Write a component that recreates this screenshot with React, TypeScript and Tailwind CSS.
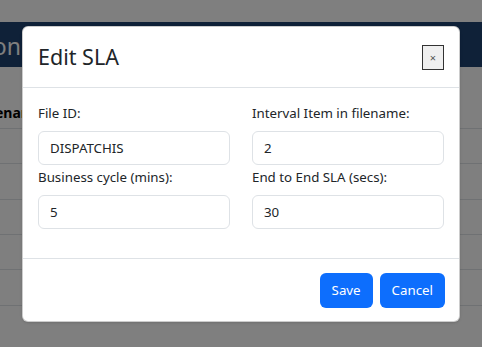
const font = { fontFamily: '"Noto Sans", "Open Sans", sans-serif' };

const rowHeights = [35, 36, 35, 35, 36];

const Field = ({ label, value }: { label: string; value: string }) => (
  <div>
    <label className="block text-[13.3px] leading-[21px] text-[#212529] mb-[7px]">{label}</label>
    <input
      readOnly
      value={value}
      className="block w-full h-[34px] px-[11px] text-[13.3px] text-[#212529] border border-[#dee2e6] rounded-[6px] outline-none"
    />
  </div>
);

const App = () => (
  <div className="relative w-[482px] h-[347px] overflow-hidden bg-white" style={font}>
    {/* page behind the dialog */}
    <div className="pt-[22px]">
      <div className="h-[45px] bg-[#1e4270] flex items-center overflow-hidden">
        <span className="text-[23px] leading-none text-white -ml-[28px] pt-[4px] whitespace-nowrap">Monitoring</span>
      </div>
      <div className="pt-[35px]">
        <div className="h-[26px] flex items-end pb-[5px] -ml-[20px] text-[14px] font-bold text-black">Scenario</div>
        {rowHeights.map((h, i) => (
          <div key={i} className="border-t border-[#dee2e6]" style={{ height: h }} />
        ))}
        <div className="border-t border-[#dee2e6]" />
      </div>
    </div>

    {/* backdrop + dialog */}
    <div className="absolute inset-0 bg-black/50">
      <div className="mx-auto mt-[26px] w-[438px] bg-white rounded-[6px] border border-black/20 shadow-sm text-[#212529]">
        <div className="flex items-center justify-between px-[15px] h-[61px] border-b border-[#dee2e6]">
          <h4 className="text-[21.5px] leading-[1.2] font-normal">Edit SLA</h4>
          <button className="w-[22px] h-[25px] bg-[#efefef] border border-[#333] text-[11px] leading-none text-[#555] flex items-center justify-center">
            ×
          </button>
        </div>
        <div className="px-[15px] pt-[15px] pb-[29px] grid grid-cols-2 gap-x-[22px] gap-y-[2px]">
          <Field label="File ID:" value="DISPATCHIS" />
          <Field label="Interval Item in filename:" value="2" />
          <Field label="Business cycle (mins):" value="5" />
          <Field label="End to End SLA (secs):" value="30" />
        </div>
        <div className="flex justify-end gap-[7px] px-[14px] pt-[14px] pb-[13px] border-t border-[#dee2e6]">
          <button className="h-[35px] px-[12px] rounded-[6px] bg-[#0d6efd] text-white text-[13.3px]">Save</button>
          <button className="h-[35px] px-[12px] rounded-[6px] bg-[#0d6efd] text-white text-[13.3px]">Cancel</button>
        </div>
      </div>
    </div>
  </div>
);

export default App;
